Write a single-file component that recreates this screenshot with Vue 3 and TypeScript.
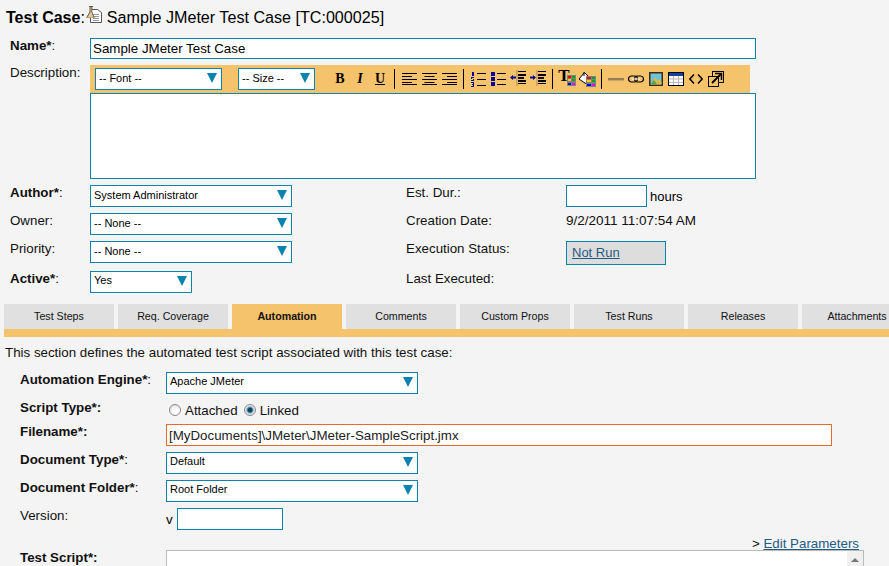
<template>
  <div class="page">
    <h1 class="heading">
      <span class="heading-kind"><b>Test Case</b>:</span>
      <svg class="case-icon" width="17" height="18" viewBox="0 0 17 18">
        <path d="M4.5 3.5h7l4 3v10h-11z" fill="#fff" stroke="#555" />
        <path d="M7 8.500h6M7 10.500h6M7 12.500h6M7 14.500h6" stroke="#999" />
        <path d="M3 .5h4M4 1v5L.7 11.500h7.500L5.800 6V1" fill="#d8c9a8" stroke="#6b5a3c" />
        <path d="M1 11h7v1H1z" fill="#c9a35c" />
      </svg>
      <span class="heading-title">Sample JMeter Test Case [TC:000025]</span>
    </h1>

    <div class="name-row">
      <label class="label"><b>Name*</b>:</label>
      <input class="field name-input" value="Sample JMeter Test Case" />
    </div>

    <div class="desc-row">
      <label class="label">Description:</label>
      <div class="editor">
        <div class="toolbar">
          <div class="select font-select"><span>-- Font --</span><i class="arrow"></i></div>
          <div class="select size-select"><span>-- Size --</span><i class="arrow"></i></div>
          <div class="tools">
            <span class="tool letter"><b>B</b></span>
            <span class="tool letter"><b><em>I</em></b></span>
            <span class="tool letter"><b><u>U</u></b></span>
            <i class="sep"></i>
            <span class="tool">
              <svg width="15" height="12" viewBox="0 0 15 12" stroke="#000">
                <path d="M0 .5h15M0 3.500h10M0 6.500h15M0 9.500h10M0 11.500h15" />
              </svg>
            </span>
            <span class="tool">
              <svg width="15" height="12" viewBox="0 0 15 12" stroke="#000">
                <path d="M0 .5h15M2.500 3.500h10M0 6.500h15M2.500 9.500h10M0 11.500h15" />
              </svg>
            </span>
            <span class="tool">
              <svg width="15" height="12" viewBox="0 0 15 12" stroke="#000">
                <path d="M0 .5h15M5 3.500h10M0 6.500h15M5 9.500h10M0 11.500h15" />
              </svg>
            </span>
            <i class="sep"></i>
            <span class="tool">
              <svg width="15" height="15" viewBox="0 0 15 15">
                <path d="M6 1.500h9M6 7.500h9M6 13.500h9" stroke="#000" />
                <path d="M1 0h2v4H1zM0 5h3v1H1v1h2v2H0V8h2V7H0zM0 10h3v5H0v-1h2v-1H1v-1h1v-1H0z" fill="#00009a" />
              </svg>
            </span>
            <span class="tool">
              <svg width="15" height="14" viewBox="0 0 15 14">
                <path d="M6 1.500h9M6 7.500h9M6 12.500h9" stroke="#000" />
                <path d="M0 0h4v4H0zM0 5h4v4H0zM0 10h4v4H0z" fill="#00009a" />
              </svg>
            </span>
            <span class="tool">
              <svg class="raised" width="16" height="16" viewBox="0 0 16 16">
                <path d="M7 .5v15" stroke="#555" stroke-dasharray="1 1" />
                <path d="M8 1.500h8M8 13.500h8" stroke="#000" />
                <path d="M8 4h8v2H8zM8 7h6v2H8zM8 10h8v2H8z" fill="#000" />
                <path d="M0 7.500 3 5v1.500h3v2H3V10z" fill="#00009a" />
              </svg>
            </span>
            <span class="tool">
              <svg class="raised" width="16" height="16" viewBox="0 0 16 16">
                <path d="M7 .5v15" stroke="#555" stroke-dasharray="1 1" />
                <path d="M8 1.500h8M8 13.500h8" stroke="#000" />
                <path d="M8 4h8v2H8zM8 7h6v2H8zM8 10h8v2H8z" fill="#000" />
                <path d="M6 7.500 3 5v1.500H0v2h3V10z" fill="#00009a" />
              </svg>
            </span>
            <i class="sep"></i>
            <span class="tool swatch-tool">
              <span class="big-t">T</span>
              <svg class="swatch" width="9" height="11" viewBox="0 0 9 11">
                <rect width="9" height="11" fill="#808080" />
                <path d="M1 1h3v2H1z" fill="#e00" /><path d="M5 1h3v2H5z" fill="#0a0" />
                <path d="M1 4h3v2H1z" fill="#fc0" /><path d="M5 4h3v2H5z" fill="#0a0" />
                <path d="M1 8h3v2H1z" fill="#00d" /><path d="M5 8h3v2H5z" fill="#e0e" />
              </svg>
            </span>
            <span class="tool">
              <svg width="18" height="16" viewBox="0 0 18 16">
                <path d="M1 8 6.500 1.500l5 5-4 6z" fill="#fff" stroke="#000" />
                <path d="M6 1v4" stroke="#000" />
                <rect x="8" y="5" width="10" height="11" fill="#808080" />
                <path d="M9 6h4v2H9z" fill="#e00" /><path d="M14 6h3v2h-3z" fill="#0a0" />
                <path d="M9 9h4v2H9z" fill="#fc0" /><path d="M14 9h3v2h-3z" fill="#0a0" />
                <path d="M9 13h4v2H9z" fill="#00d" /><path d="M14 13h3v2h-3z" fill="#e0e" />
              </svg>
            </span>
            <i class="sep"></i>
            <span class="tool">
              <svg width="16" height="3" viewBox="0 0 16 3">
                <path d="M0 1h16" stroke="#333" stroke-width="1" />
                <path d="M0 2h16" stroke="#9a8a6a" stroke-width="1" />
              </svg>
            </span>
            <span class="tool">
              <svg width="16" height="8" viewBox="0 0 16 8" fill="none">
                <rect x=".5" y="1" width="9" height="6" rx="3" stroke="#000" stroke-width="1.200" />
                <rect x="6.500" y="1" width="9" height="6" rx="3" stroke="#000" stroke-width="1.200" />
                <path d="M4 4h8" stroke="#fff" />
              </svg>
            </span>
            <span class="tool">
              <svg width="14" height="14" viewBox="0 0 14 14">
                <rect width="14" height="14" fill="#3a2a12" />
                <rect x="1.500" y="1.500" width="11" height="11" fill="#6cc4d8" />
                <path d="M1.500 12.500 6 5l3 4 1.500-2 2 3v2.500z" fill="#d8b84a" />
                <path d="M1.500 12.500 5 8l3 4.500z" fill="#5aa04a" />
              </svg>
            </span>
            <span class="tool">
              <svg width="16" height="14" viewBox="0 0 16 14">
                <rect x=".5" y=".5" width="15" height="13" fill="#fff" stroke="#000" />
                <rect x="1" y="1" width="14" height="3" fill="#1c3f9c" />
                <path d="M1 7h14M1 10.500h14M5.500 4v9M10.500 4v9" stroke="#b8b8b8" />
              </svg>
            </span>
            <span class="tool">
              <svg width="14" height="10" viewBox="0 0 14 10" fill="none" stroke="#000" stroke-width="1.500">
                <path d="M5 .5.900 5 5 9.500M9 .5 13.100 5 9 9.500" />
              </svg>
            </span>
            <span class="tool">
              <svg width="16" height="16" viewBox="0 0 16 16" fill="none" stroke="#000">
                <rect x="4.500" y=".5" width="11" height="11" stroke-width="1" />
                <rect x=".5" y="5.500" width="10" height="10" stroke-width="1" fill="#f6c36d" />
                <path d="M4 12 13 3" stroke-width="2" />
                <path d="M7 2.500h6.500V9" stroke-width="1.500" />
              </svg>
            </span>
          </div>
        </div>
        <div class="editor-body"></div>
      </div>
    </div>

    <div class="meta">
      <label class="label"><b>Author*</b>:</label>
      <div class="select wide"><span>System Administrator</span><i class="arrow"></i></div>
      <label class="label">Est. Dur.:</label>
      <div class="duration"><input class="field duration-input" /><span>hours</span></div>

      <label class="label">Owner:</label>
      <div class="select wide"><span>-- None --</span><i class="arrow"></i></div>
      <label class="label">Creation Date:</label>
      <div class="value">9/2/2011 11:07:54 AM</div>

      <label class="label">Priority:</label>
      <div class="select wide"><span>-- None --</span><i class="arrow"></i></div>
      <label class="label">Execution Status:</label>
      <div class="status"><a href="#">Not Run</a></div>

      <label class="label active-label"><b>Active*</b>:</label>
      <div class="select narrow active-label"><span>Yes</span><i class="arrow"></i></div>
      <label class="label active-label">Last Executed:</label>
      <div></div>
    </div>

    <div class="tabs">
      <div
        v-for="tab in tabs"
        :key="tab"
        class="tab"
        :class="{ current: tab === 'Automation' }"
      >
        {{ tab }}
      </div>
    </div>
    <div class="tab-bar"></div>

    <p class="intro">This section defines the automated test script associated with this test case:</p>

    <div class="form">
      <label class="label"><b>Automation Engine*</b>:</label>
      <div class="select long"><span>Apache JMeter</span><i class="arrow"></i></div>

      <label class="label"><b>Script Type*:</b></label>
      <div class="radios">
        <span class="radio"></span><span>Attached</span>
        <span class="radio on"></span><span>Linked</span>
      </div>

      <label class="label"><b>Filename*:</b></label>
      <input class="field file-input" value="[MyDocuments]\JMeter\JMeter-SampleScript.jmx" />

      <label class="label"><b>Document Type*</b>:</label>
      <div class="select long"><span>Default</span><i class="arrow"></i></div>

      <label class="label"><b>Document Folder*</b>:</label>
      <div class="select long"><span>Root Folder</span><i class="arrow"></i></div>

      <label class="label">Version:</label>
      <div class="version"><span>v</span><input class="field version-input" /></div>
    </div>

    <div class="params">&gt; <a href="#">Edit Parameters</a></div>

    <div class="script-row">
      <label class="label"><b>Test Script*:</b></label>
      <div class="script-box">
        <div class="scrollbar"><i></i></div>
      </div>
    </div>
  </div>
</template>

<script setup lang="ts">
const tabs: string[] = [
  "Test Steps",
  "Req. Coverage",
  "Automation",
  "Comments",
  "Custom Props",
  "Test Runs",
  "Releases",
  "Attachments",
];
</script>

<style>
html,
body {
  margin: 0;
  background: #f4f4f4;
  overflow: hidden;
}
</style>

<style scoped>
.page {
  width: 889px;
  height: 566px;
  overflow: hidden;
  background: #f4f4f4;
  color: #000;
  font-family: "Liberation Sans", Arial, sans-serif;
  font-size: 13.330px;
}

.heading {
  display: flex;
  align-items: center;
  height: 38px;
  margin: 0;
  padding: 0 0 3px 6px;
  box-sizing: border-box;
  font-weight: normal;
}

.heading-kind {
  font-size: 16px;
}

.case-icon {
  margin: -6px 4px 0 1px;
}

.heading-title {
  font-size: 16.130px;
}

.label {
  font-size: 13.330px;
  line-height: 15px;
  color: #111;
}

.field {
  display: block;
  box-sizing: border-box;
  height: 22px;
  border: 1px solid #0a84ae;
  background: #fff;
  padding: 0 2px;
  margin: 0;
  outline: none;
  border-radius: 0;
  font-family: inherit;
  color: #000;
}

.name-row {
  display: flex;
  padding-left: 10px;
}

.name-row .label {
  width: 80px;
}

.name-input {
  width: 666px;
  height: 21px;
  font-size: 13.330px;
}

.desc-row {
  display: flex;
  padding: 6px 0 0 10px;
}

.desc-row .label {
  width: 80px;
}

.editor {
  width: 666px;
}

.toolbar {
  display: flex;
  align-items: center;
  width: 660px;
  height: 28px;
  padding-left: 5px;
  box-sizing: border-box;
  background: #f6c36d;
}

.select {
  display: flex;
  align-items: center;
  justify-content: space-between;
  box-sizing: border-box;
  height: 22px;
  padding: 0 4px 0 3px;
  border: 1px solid #0a84ae;
  background: #fff;
  font-size: 11px;
  color: #000;
}

.select span {
  margin-top: -2px;
}

.long span {
  margin-top: -4px;
}

.narrow span {
  margin-top: -4px;
}

.arrow {
  width: 0;
  height: 0;
  margin-top: -3px;
  border-left: 5px solid transparent;
  border-right: 5px solid transparent;
  border-top: 10px solid #0a84ae;
}

.font-select {
  width: 127px;
}

.size-select {
  width: 77px;
  margin-left: 16px;
}

.tools {
  display: flex;
  align-items: center;
  margin-left: 15px;
  height: 100%;
}

.tool {
  display: flex;
  align-items: center;
  justify-content: center;
  width: 20px;
  height: 20px;
  position: relative;
}

.raised {
  margin-top: -2px;
}

.letter {
  font-family: "Liberation Serif", serif;
  font-size: 14px;
}

.sep {
  width: 1px;
  height: 20px;
  margin: 0 4px;
  background: #000;
}

.swatch-tool .big-t {
  font-family: "Liberation Serif", serif;
  font-size: 17px;
  font-weight: bold;
  margin: -6px 0 0 -6px;
}

.swatch {
  position: absolute;
  right: 1px;
  bottom: 3px;
}

.editor-body {
  box-sizing: border-box;
  height: 86px;
  border: 1px solid #0a84ae;
  background: #fff;
}

.meta {
  display: grid;
  grid-template-columns: 80px 316px 160px 1fr;
  grid-template-rows: 22px 22px 22px 22px;
  row-gap: 6px;
  padding: 6px 0 0 10px;
}

.meta .active-label {
  margin-top: 2px;
}

.wide {
  width: 202px;
}

.narrow {
  width: 102px;
}

.duration {
  display: flex;
  align-items: center;
  gap: 3px;
  font-size: 13px;
}

.duration-input {
  width: 81px;
}

.value {
  font-size: 13.500px;
  line-height: 15px;
  color: #111;
}

.status {
  box-sizing: border-box;
  width: 100px;
  height: 24px;
  padding: 3px 5px;
  border: 1px solid #0a84ae;
  background: #ddd;
  font-size: 13px;
  line-height: 16px;
}

a {
  color: #1f5a85;
}

.tabs {
  display: flex;
  gap: 4px;
  margin: 13px 0 0 4px;
  width: 920px;
}

.tab {
  flex: none;
  width: 110px;
  height: 25px;
  background: #e0e0e0;
  text-align: center;
  font-size: 10.670px;
  line-height: 25px;
  color: #111;
}

.tab.current {
  background: #f6c36d;
  font-weight: bold;
}

.tab-bar {
  height: 8px;
  margin-left: 4px;
  background: #f6c36d;
}

.intro {
  margin: 8px 0 0 5px;
  font-size: 13.330px;
  line-height: 15px;
  color: #111;
}

.form {
  display: grid;
  grid-template-columns: 146px 1fr;
  grid-template-rows: 22px 18px 22px 22px 22px 22px;
  row-gap: 6px;
  margin-top: 12px;
  padding-left: 20px;
}

.long {
  width: 252px;
}

.radios {
  display: flex;
  align-items: center;
  height: 20px;
  font-size: 13.330px;
  color: #111;
}

.radio {
  box-sizing: border-box;
  width: 12px;
  height: 12px;
  margin: 0 4px 0 3px;
  border: 1px solid #8a8a8a;
  border-radius: 50%;
  background: radial-gradient(circle at 60% 65%, #fff 30%, #d0d0d0 100%);
}

.radio.on {
  margin-left: 6px;
  background: radial-gradient(circle, #16425e 0 27%, #7db4d0 45%, #e6e6e6 60%);
}

.file-input {
  width: 666px;
  border-color: #e8692c;
  font-size: 13.330px;
  color: #222;
}

.version {
  display: flex;
  align-items: center;
  gap: 4px;
}

.version-input {
  width: 106px;
}

.params {
  height: 13px;
  margin-top: 7px;
  padding-right: 30px;
  text-align: right;
  line-height: 14px;
  color: #111;
}

.script-row {
  display: flex;
  padding-left: 20px;
}

.script-row .label {
  width: 146px;
}

.script-box {
  position: relative;
  box-sizing: border-box;
  width: 698px;
  height: 80px;
  border: 1px solid #bbb;
  background: #fff;
}

.scrollbar {
  position: absolute;
  top: 0;
  right: 0;
  bottom: 0;
  width: 16px;
  background: #f0f0f0;
}

.scrollbar i {
  position: absolute;
  top: 7px;
  left: 4px;
  border-left: 4px solid transparent;
  border-right: 4px solid transparent;
  border-bottom: 4px solid #777;
}
</style>
